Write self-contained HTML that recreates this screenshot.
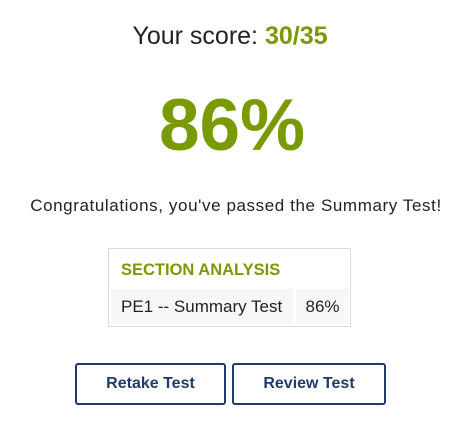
<!DOCTYPE html>
<html><head><style>
body{margin:0;width:468px;height:433px;background:#fff;font-family:"Liberation Sans",sans-serif;color:#222;position:relative;overflow:hidden}
.a{position:absolute;left:0;width:468px;text-align:center;white-space:nowrap}
.g{color:#7a9a01}
.box{position:absolute;left:108px;top:248px;width:241px;height:77px;border:1px solid #ddd}
.h{position:absolute;left:12px;top:12px;font-weight:bold;font-size:16.5px;color:#7a9a01}
.c{position:absolute;top:40px;height:35px;background:#f7f7f7;font-size:17px;line-height:35px}
.btn{position:absolute;top:363px;height:38px;border:2px solid #1f3b6e;border-radius:3px;color:#1f3b6e;font-weight:bold;font-size:16px;line-height:38px;text-align:center}
</style></head><body>
<div class="a" style="top:22px;left:-4px;font-size:25px">Your score: <b class="g">30/35</b></div>
<div class="a g" style="top:81px;left:-2px;font-size:73px;font-weight:bold;line-height:90px">86%</div>
<div class="a" style="top:196px;left:2px;font-size:17px;letter-spacing:0.6px">Congratulations, you've passed the Summary Test!</div>
<div class="box"><div class="h">SECTION ANALYSIS</div>
<div class="c" style="left:2px;width:182px;padding-left:10px;box-sizing:border-box">PE1 -- Summary Test</div>
<div class="c" style="left:187px;width:53px;text-align:center">86%</div></div>
<div class="btn" style="left:75px;width:147px">Retake Test</div>
<div class="btn" style="left:232px;width:150px">Review Test</div>
</body></html>
